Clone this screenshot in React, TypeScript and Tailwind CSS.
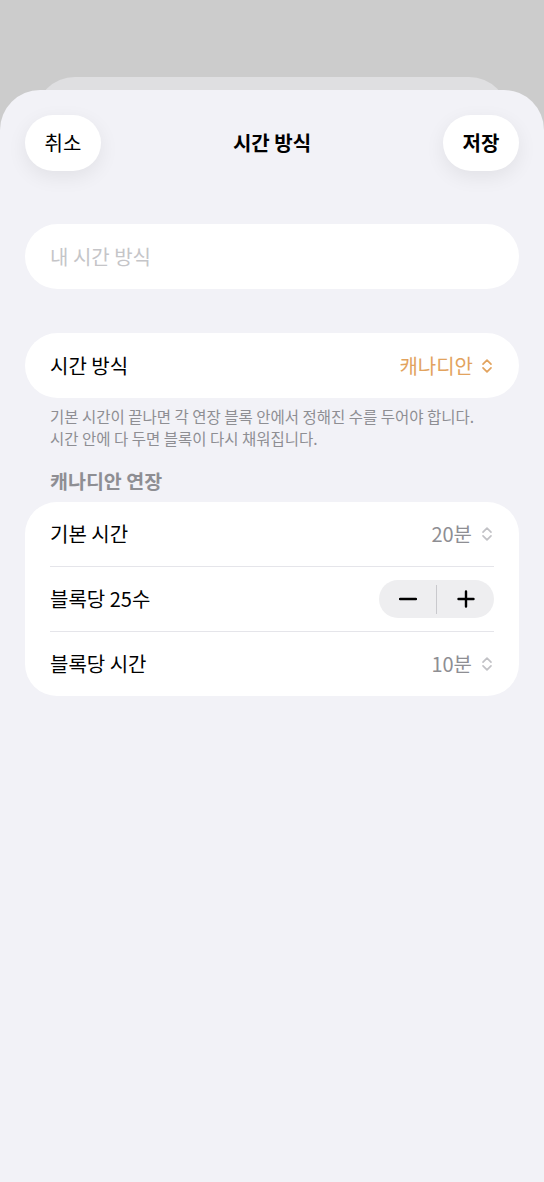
import React from "react";

const font = {
  fontFamily: '"Noto Sans CJK KR", "Noto Sans", sans-serif',
};

function Chevron({ color }: { color: string }) {
  return (
    <svg width="12" height="16" viewBox="0 0 12 16" fill="none" className="shrink-0">
      <path d="M2 6.2 L6 2.2 L10 6.2" stroke={color} strokeWidth="1.7" strokeLinecap="round" strokeLinejoin="round" />
      <path d="M2 9.8 L6 13.8 L10 9.8" stroke={color} strokeWidth="1.7" strokeLinecap="round" strokeLinejoin="round" />
    </svg>
  );
}

export default function App() {
  return (
    <div className="flex min-h-[1182px] flex-col bg-[#cccccc] pt-[77px]" style={font}>
      <div className="mx-[35px] h-[50px] rounded-t-[40px] bg-[#dfdfe1]" />
      <div className="relative -mt-[37px] flex flex-1 flex-col rounded-t-[40px] bg-[#f2f2f7] px-[25px] pt-[25px]">
        {/* header */}
        <div className="flex items-center justify-between">
          <button className="flex h-[56px] w-[76px] items-center justify-center rounded-full bg-white text-[20px] font-normal text-black shadow-[0_6px_20px_rgba(0,0,0,0.07)]">
            취소
          </button>
          <div className="text-[20px] font-semibold text-black">시간 방식</div>
          <button className="flex h-[56px] w-[76px] items-center justify-center rounded-full bg-white text-[20px] font-semibold text-black shadow-[0_6px_20px_rgba(0,0,0,0.07)]">
            저장
          </button>
        </div>

        {/* input */}
        <div className="mt-[53px] flex h-[65px] items-center rounded-full bg-white px-[25px]">
          <span className="text-[20px] text-[#c5c5c8]">내 시간 방식</span>
        </div>

        {/* time mode */}
        <div className="mt-[44px] flex h-[65px] items-center justify-between rounded-full bg-white pl-[25px] pr-[26px]">
          <span className="text-[20px] text-black">시간 방식</span>
          <div className="flex items-center gap-[8px]">
            <span className="text-[20px] text-[#e2a35e]">캐나디안</span>
            <Chevron color="#e2a35e" />
          </div>
        </div>

        <p className="mt-[7px] px-[25px] text-[15.5px] leading-[22px] text-[#8e8e93]">
          기본 시간이 끝나면 각 연장 블록 안에서 정해진 수를 두어야 합니다.
          <br />
          시간 안에 다 두면 블록이 다시 채워집니다.
        </p>

        <div className="mt-[20px] px-[25px] text-[19.5px] font-semibold leading-[24px] text-[#8e8e93]">
          캐나디안 연장
        </div>

        {/* card */}
        <div className="mt-[9px] flex flex-col rounded-[32px] bg-white">
          <div className="flex h-[64px] items-center justify-between pl-[25px] pr-[26px]">
            <span className="text-[20px] text-black">기본 시간</span>
            <div className="flex items-center gap-[9px]">
              <span className="text-[20px] text-[#8e8e93]">20분</span>
              <Chevron color="#c2c2c6" />
            </div>
          </div>
          <div className="mx-[25px] h-px bg-[#e5e5ea]" />
          <div className="flex h-[64px] items-center justify-between pl-[25px] pr-[25px]">
            <span className="text-[20px] text-black">블록당 25수</span>
            <div className="flex h-[38px] w-[115px] items-center rounded-full bg-[#eeeef0]">
              <div className="flex flex-1 items-center justify-center">
                <svg width="18" height="18" viewBox="0 0 18 18">
                  <path d="M1 9 H17" stroke="#000" strokeWidth="2.4" strokeLinecap="round" />
                </svg>
              </div>
              <div className="h-[29px] w-px bg-[#c9c9cd]" />
              <div className="flex flex-1 items-center justify-center">
                <svg width="18" height="18" viewBox="0 0 18 18">
                  <path d="M1.5 9 H16.5 M9 1.5 V16.5" stroke="#000" strokeWidth="2.4" strokeLinecap="round" />
                </svg>
              </div>
            </div>
          </div>
          <div className="mx-[25px] h-px bg-[#e5e5ea]" />
          <div className="flex h-[64px] items-center justify-between pl-[25px] pr-[26px]">
            <span className="text-[20px] text-black">블록당 시간</span>
            <div className="flex items-center gap-[9px]">
              <span className="text-[20px] text-[#8e8e93]">10분</span>
              <Chevron color="#c2c2c6" />
            </div>
          </div>
        </div>
      </div>
    </div>
  );
}
